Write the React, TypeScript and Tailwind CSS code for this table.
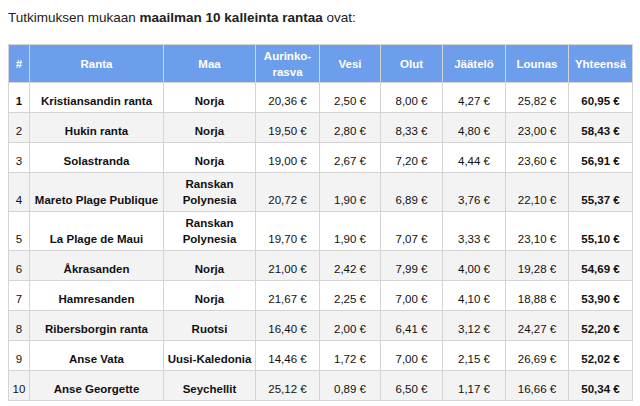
import React from "react";

type Row = {
  n: string;
  ranta: string;
  maa: string[];
  vals: string[];
  total: string;
};

const rows: Row[] = [
  { n: "1", ranta: "Kristiansandin ranta", maa: ["Norja"], vals: ["20,36 €", "2,50 €", "8,00 €", "4,27 €", "25,82 €"], total: "60,95 €" },
  { n: "2", ranta: "Hukin ranta", maa: ["Norja"], vals: ["19,50 €", "2,80 €", "8,33 €", "4,80 €", "23,00 €"], total: "58,43 €" },
  { n: "3", ranta: "Solastranda", maa: ["Norja"], vals: ["19,00 €", "2,67 €", "7,20 €", "4,44 €", "23,60 €"], total: "56,91 €" },
  { n: "4", ranta: "Mareto Plage Publique", maa: ["Ranskan", "Polynesia"], vals: ["20,72 €", "1,90 €", "6,89 €", "3,76 €", "22,10 €"], total: "55,37 €" },
  { n: "5", ranta: "La Plage de Maui", maa: ["Ranskan", "Polynesia"], vals: ["19,70 €", "1,90 €", "7,07 €", "3,33 €", "23,10 €"], total: "55,10 €" },
  { n: "6", ranta: "Åkrasanden", maa: ["Norja"], vals: ["21,00 €", "2,42 €", "7,99 €", "4,00 €", "19,28 €"], total: "54,69 €" },
  { n: "7", ranta: "Hamresanden", maa: ["Norja"], vals: ["21,67 €", "2,25 €", "7,00 €", "4,10 €", "18,88 €"], total: "53,90 €" },
  { n: "8", ranta: "Ribersborgin ranta", maa: ["Ruotsi"], vals: ["16,40 €", "2,00 €", "6,41 €", "3,12 €", "24,27 €"], total: "52,20 €" },
  { n: "9", ranta: "Anse Vata", maa: ["Uusi-Kaledonia"], vals: ["14,46 €", "1,72 €", "7,00 €", "2,15 €", "26,69 €"], total: "52,02 €" },
  { n: "10", ranta: "Anse Georgette", maa: ["Seychellit"], vals: ["25,12 €", "0,89 €", "6,50 €", "1,17 €", "16,66 €"], total: "50,34 €" },
];

const widths = [21, 134, 92, 64, 61, 62, 63, 63, 64];

export default function App() {
  const th =
    "border border-[#d4d4d4] bg-[#6d9eeb] text-white font-bold text-center align-middle px-[3px] pt-[3px] pb-[2px] leading-[16px]";
  const td =
    "border border-[#d4d4d4] text-center align-bottom px-[2px] pt-[3px] pb-[3px] leading-[16px] text-[#111]";
  return (
    <div
      className="bg-white w-[640px] h-[406px] px-[8px] pt-[10px]"
      style={{ fontFamily: '"Liberation Sans", Arial, sans-serif' }}
    >
      <p className="text-[13.5px] leading-[16px] text-[#222] mb-[18px]">
        Tutkimuksen mukaan <b>maailman 10 kalleinta rantaa</b> ovat:
      </p>
      <table className="table-fixed border-collapse w-[624px] text-[11.5px]">
        <colgroup>
          {widths.map((w, i) => (
            <col key={i} style={{ width: w }} />
          ))}
        </colgroup>
        <thead>
          <tr>
            <th className={th}>#</th>
            <th className={th}>Ranta</th>
            <th className={th}>Maa</th>
            <th className={th}>
              Aurinko-
              <br />
              rasva
            </th>
            <th className={th}>Vesi</th>
            <th className={th}>Olut</th>
            <th className={th}>Jäätelö</th>
            <th className={th}>Lounas</th>
            <th className={th}>Yhteensä</th>
          </tr>
        </thead>
        <tbody>
          {rows.map((r, i) => {
            const two = r.maa.length > 1;
            return (
              <tr
                key={r.n}
                className={`${i % 2 === 1 ? "bg-[#f3f3f3]" : "bg-white"} ${two ? "" : "h-[30px]"}`}
              >
                <td className={`${td} ${i === 0 ? "font-bold" : ""}`}>{r.n}</td>
                <td className={`${td} font-bold whitespace-nowrap`}>{r.ranta}</td>
                <td className={`${td} font-bold whitespace-nowrap`}>
                  {r.maa.map((m, k) => (
                    <div key={k}>{m}</div>
                  ))}
                </td>
                {r.vals.map((v, k) => (
                  <td key={k} className={td}>
                    {v}
                  </td>
                ))}
                <td className={`${td} font-bold`}>{r.total}</td>
              </tr>
            );
          })}
        </tbody>
      </table>
    </div>
  );
}
